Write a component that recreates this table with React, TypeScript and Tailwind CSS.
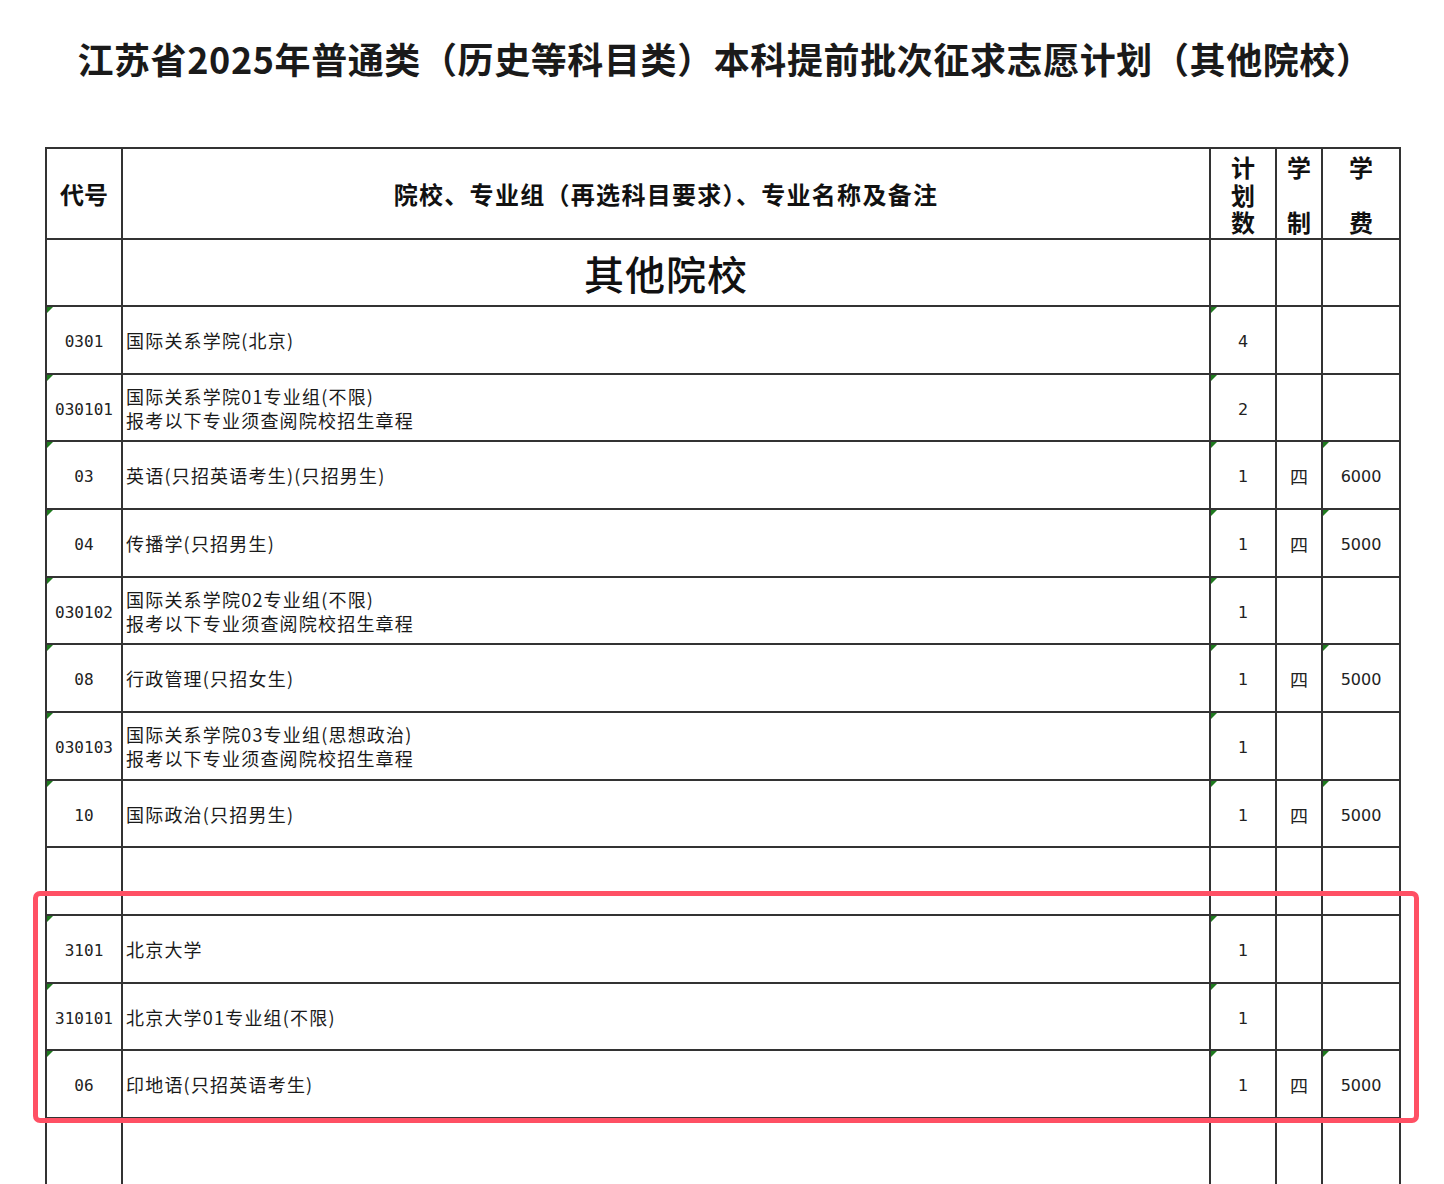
import React from "react";

type Row = {
  code?: string;
  name?: string[];
  plan?: string;
  years?: string;
  fee?: string;
  h: number;
};

const rows: Row[] = [
  { code: "0301", name: ["国际关系学院(北京)"], plan: "4", h: 68 },
  { code: "030101", name: ["国际关系学院01专业组(不限)", "报考以下专业须查阅院校招生章程"], plan: "2", h: 67 },
  { code: "03", name: ["英语(只招英语考生)(只招男生)"], plan: "1", years: "四", fee: "6000", h: 68 },
  { code: "04", name: ["传播学(只招男生)"], plan: "1", years: "四", fee: "5000", h: 68 },
  { code: "030102", name: ["国际关系学院02专业组(不限)", "报考以下专业须查阅院校招生章程"], plan: "1", h: 67 },
  { code: "08", name: ["行政管理(只招女生)"], plan: "1", years: "四", fee: "5000", h: 68 },
  { code: "030103", name: ["国际关系学院03专业组(思想政治)", "报考以下专业须查阅院校招生章程"], plan: "1", h: 68 },
  { code: "10", name: ["国际政治(只招男生)"], plan: "1", years: "四", fee: "5000", h: 67 },
  { h: 68 },
  { code: "3101", name: ["北京大学"], plan: "1", h: 68 },
  { code: "310101", name: ["北京大学01专业组(不限)"], plan: "1", h: 67 },
  { code: "06", name: ["印地语(只招英语考生)"], plan: "1", years: "四", fee: "5000", h: 68 },
  { h: 110 },
];

const cjk = { fontFamily: '"Noto Sans CJK SC", "Noto Sans", sans-serif' };

function Tri() {
  return (
    <span className="absolute left-0 top-0 h-0 w-0 border-t-[6px] border-r-[6px] border-t-[#1f7a1f] border-r-transparent" />
  );
}

export default function App() {
  return (
    <div className="relative min-h-[1184px] w-[1444px] overflow-hidden bg-white text-[#111]" style={cjk}>
      <div className="flex h-[147px] items-start justify-center pl-[6px] pt-[34px]">
        <h1 className="text-[36px] font-bold leading-[48px] tracking-[0.6px] text-[#1a1a1a]">
          江苏省2025年普通类（历史等科目类）本科提前批次征求志愿计划（其他院校）
        </h1>
      </div>

      <table className="ml-[45px] w-[1354px] table-fixed border-collapse border-2 border-[#333]">
        <colgroup>
          <col className="w-[76px]" />
          <col className="w-[1088px]" />
          <col className="w-[66px]" />
          <col className="w-[46px]" />
          <col className="w-[78px]" />
        </colgroup>
        <tbody>
          <tr className="h-[91px]">
            <td className="border-2 border-[#333] text-center align-middle text-[24px] font-bold">代号</td>
            <td className="border-2 border-[#333] text-center align-middle text-[24px] font-bold tracking-[1.3px]">
              院校、专业组（再选科目要求）、专业名称及备注
            </td>
            <td className="border-2 border-[#333] p-0 align-top">
              <div className="flex h-[88px] flex-col items-center justify-between pb-[3px] pt-[6px] text-[24px] font-bold leading-[24px]">
                <span>计</span>
                <span>划</span>
                <span>数</span>
              </div>
            </td>
            <td className="border-2 border-[#333] p-0 align-top">
              <div className="flex h-[88px] flex-col items-center justify-between pb-[3px] pt-[6px] text-[24px] font-bold leading-[24px]">
                <span>学</span>
                <span>制</span>
              </div>
            </td>
            <td className="border-2 border-[#333] p-0 align-top">
              <div className="flex h-[88px] flex-col items-center justify-between pb-[3px] pt-[6px] text-[24px] font-bold leading-[24px]">
                <span>学</span>
                <span>费</span>
              </div>
            </td>
          </tr>
          <tr className="h-[67px]">
            <td className="border-2 border-[#333]" />
            <td className="border-2 border-[#333] text-center align-middle text-[40px] font-medium leading-[48px] tracking-[1px]">
              其他院校
            </td>
            <td className="border-2 border-[#333]" />
            <td className="border-2 border-[#333]" />
            <td className="border-2 border-[#333]" />
          </tr>
          {rows.map((r, i) => (
            <tr key={i} style={{ height: r.h }}>
              <td
                className="relative border-2 border-[#333] p-0 pt-[4px] text-center align-middle text-[16px] text-[#222]"
                style={{ fontFamily: '"DejaVu Sans Mono", "Liberation Mono", monospace' }}
              >
                {r.code && <Tri />}
                {r.code}
              </td>
              <td className="border-2 border-[#333] px-[3px] align-middle text-[18px] leading-[24px] tracking-[1.2px] text-[#1a1a1a]">
                {r.name?.map((n, j) => (
                  <div key={j}>{n}</div>
                ))}
              </td>
              <td
                className="relative border-2 border-[#333] p-0 pt-[4px] text-center align-middle text-[16px] text-[#222]"
                style={{ fontFamily: '"DejaVu Sans", "Liberation Sans", sans-serif' }}
              >
                {r.plan && <Tri />}
                {r.plan}
              </td>
              <td className="border-2 border-[#333] p-0 pt-[3px] text-center align-middle text-[18px] text-[#222]">
                {r.years}
              </td>
              <td
                className="relative border-2 border-[#333] p-0 pt-[4px] text-center align-middle text-[16px] text-[#222]"
                style={{ fontFamily: '"DejaVu Sans", "Liberation Sans", sans-serif' }}
              >
                {r.fee && <Tri />}
                {r.fee}
              </td>
            </tr>
          ))}
        </tbody>
      </table>

      <div className="pointer-events-none absolute left-[33px] top-[891px] h-[232px] w-[1386px] rounded-[7px] border-[5px] border-[#ff5064]" />
    </div>
  );
}
